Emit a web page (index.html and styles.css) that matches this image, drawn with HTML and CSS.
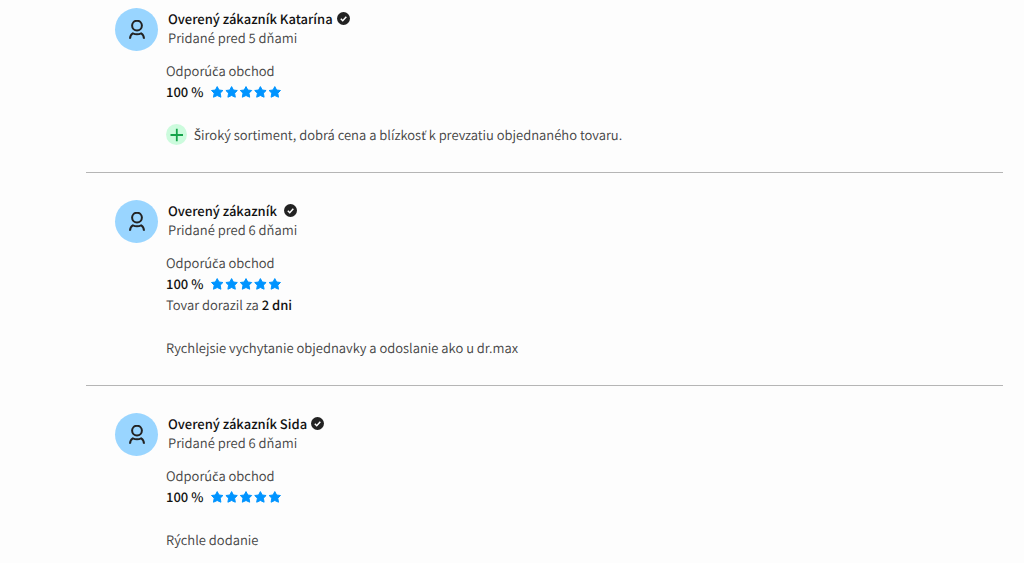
FILE: index.html
```html
<!DOCTYPE html>
<html lang="sk">
<head>
    <meta charset="UTF-8">
    <meta name="viewport" content="width=device-width, initial-scale=1.0">
    <title>Recenzie obchodu</title>
    <link rel="stylesheet" href="styles.css">
</head>
<body>
    <!-- Shared icons -->
    <svg class="sprite" aria-hidden="true">
        <symbol id="icon-user" viewBox="0 0 18 20">
            <circle cx="9" cy="5.600" r="4.900"/>
            <path d="M2 18.800c.1-2.800 1.200-4.700 2.800-5.500 2.600 1.200 5.800 1.200 8.400 0 1.600.8 2.700 2.700 2.800 5.500"/>
        </symbol>
        <symbol id="icon-check" viewBox="0 0 12 12">
            <circle cx="6" cy="6" r="6" fill="#222"/>
            <path d="M3.500 6.200l1.800 1.800 3.300-3.600" fill="none" stroke="#fff" stroke-width="1.400"/>
        </symbol>
        <symbol id="icon-stars" viewBox="0 0 70 12">
            <g fill="#0094ff" stroke="#0094ff" stroke-width="1" stroke-linejoin="round">
                <path id="star" d="M6.200 .6l1.800 3.400 3.900.5-2.700 2.700.7 4L6.200 9.500 2.500 11.200l.7-4L.5 4.500l3.900-.5z"/>
                <use href="#star" x="14.400"/>
                <use href="#star" x="28.800"/>
                <use href="#star" x="43.200"/>
                <use href="#star" x="57.600"/>
            </g>
        </symbol>
    </svg>

    <main class="reviews">
        <article class="review">
            <header class="review-header">
                <div class="avatar"><svg><use href="#icon-user"/></svg></div>
                <div class="author">
                    <div class="name">Overený zákazník Katarína <svg class="verified"><use href="#icon-check"/></svg></div>
                    <div class="date">Pridané pred 5 dňami</div>
                </div>
            </header>
            <div class="review-body">
                <div>Odporú<span class="caron">č</span>a obchod</div>
                <div class="rating"><strong>100 %</strong><svg class="stars"><use href="#icon-stars"/></svg></div>
                <ul class="pros">
                    <li><svg class="plus" viewBox="0 0 21 21"><circle cx="10.500" cy="10.500" r="10.500" fill="#ccfbdd"/><path d="M4.500 11h12.500M10.800 4.800v12.500" stroke="#16a34a" stroke-width="1.800"/></svg><span><span class="caron">Š</span>iroký sortiment, dobrá cena a blízkos<span class="caron">ť</span> k prevzatiu objednaného tovaru.</span></li>
                </ul>
            </div>
        </article>

        <article class="review">
            <header class="review-header">
                <div class="avatar"><svg><use href="#icon-user"/></svg></div>
                <div class="author">
                    <div class="name">Overený zákazník&nbsp; <svg class="verified"><use href="#icon-check"/></svg></div>
                    <div class="date">Pridané pred 6 dňami</div>
                </div>
            </header>
            <div class="review-body">
                <div>Odporú<span class="caron">č</span>a obchod</div>
                <div class="rating"><strong>100 %</strong><svg class="stars"><use href="#icon-stars"/></svg></div>
                <div>Tovar dorazil za <strong>2 dni</strong></div>
                <p class="text">Rychlejsie vychytanie objednavky a odoslanie ako u dr.max</p>
            </div>
        </article>

        <article class="review">
            <header class="review-header">
                <div class="avatar"><svg><use href="#icon-user"/></svg></div>
                <div class="author">
                    <div class="name">Overený zákazník Sida <svg class="verified"><use href="#icon-check"/></svg></div>
                    <div class="date">Pridané pred 6 dňami</div>
                </div>
            </header>
            <div class="review-body">
                <div>Odporú<span class="caron">č</span>a obchod</div>
                <div class="rating"><strong>100 %</strong><svg class="stars"><use href="#icon-stars"/></svg></div>
                <p class="text">Rýchle dodanie</p>
            </div>
        </article>
    </main>
</body>
</html>
```
FILE: styles.css
```css
* {
    box-sizing: border-box;
}
body {
    margin: 0;
    background-color: #fdfdfd;
    color: #444;
    font-family: "Source Sans Pro", "Noto Sans CJK SC", "Noto Sans", sans-serif;
    font-size: 13px;
    font-weight: 350;
    line-height: 21px;
    text-rendering: geometricPrecision;
}
.sprite {
    display: none;
}
.caron {
    font-family: Lato, sans-serif;
    font-weight: 400;
    line-height: 1;
}
.reviews {
    margin: 0 21px 0 86px;
}
.review {
    padding: 27px 29px;
    border-bottom: 1px solid #b5b5b5;
}
.review:first-child {
    padding-top: 8px;
}
.review:last-child {
    border-bottom: none;
    padding-bottom: 0;
}
.review-header {
    display: flex;
    gap: 10px;
}
.avatar {
    display: flex;
    align-items: center;
    justify-content: center;
    width: 43px;
    height: 43px;
    border-radius: 50%;
    background-color: #99d5ff;
}
.avatar svg {
    width: 18px;
    height: 20px;
    fill: none;
    stroke: #222;
    stroke-width: 2;
}
.author {
    line-height: 19px;
    padding-top: 1px;
}
.name {
    display: flex;
    align-items: center;
    gap: 4px;
}
.name, strong {
    font-weight: 500;
    color: #111;
}
.verified {
    width: 13px;
    height: 13px;
}
.review-body {
    margin: 9px 0 0 51px;
}
.rating {
    display: flex;
    align-items: center;
    gap: 8px;
}
.stars {
    width: 70px;
    height: 12px;
}
.pros {
    list-style: none;
    margin: 22px 0 0;
    padding: 0;
}
.pros li {
    display: flex;
    align-items: center;
    gap: 7px;
}
.plus {
    width: 21px;
    height: 21px;
}
.text {
    margin: 22px 0 0;
}
```
